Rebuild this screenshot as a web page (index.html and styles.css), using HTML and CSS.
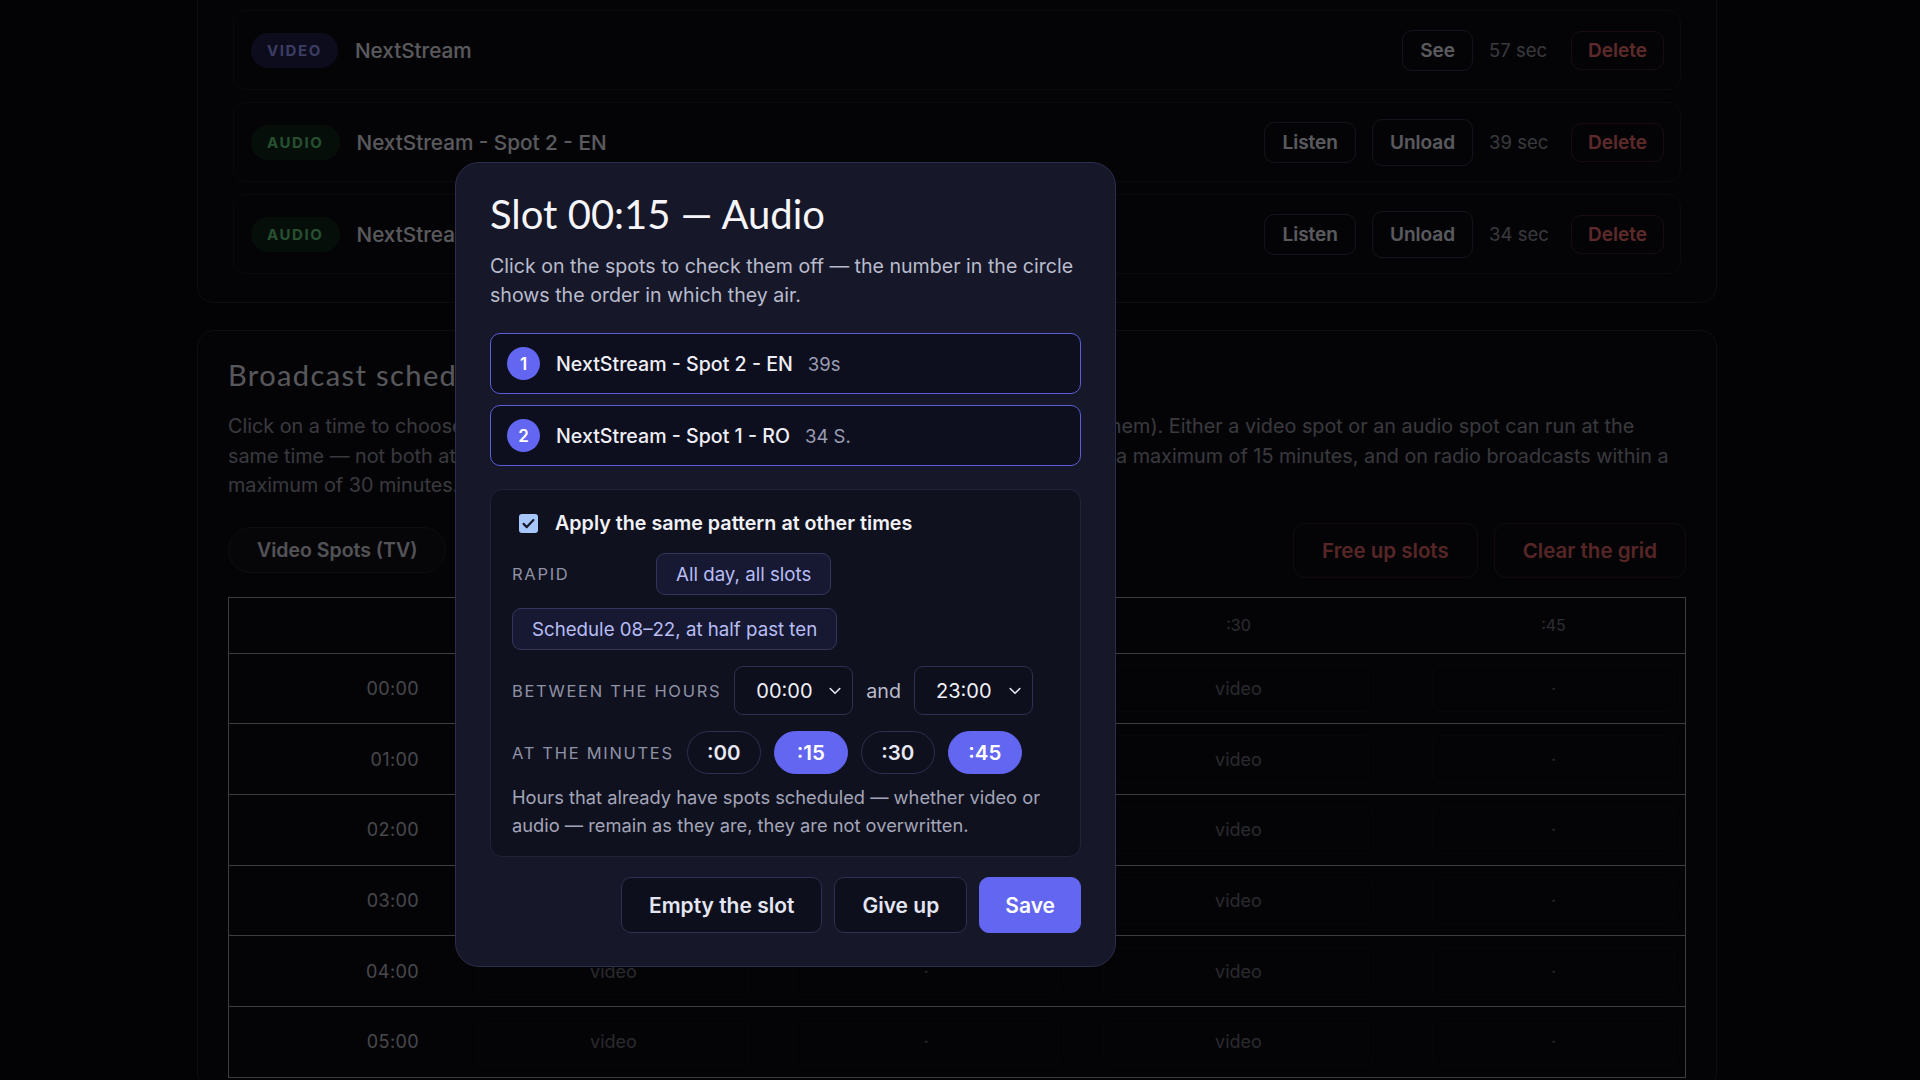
FILE: index.html
```html
<!DOCTYPE html>
<html lang="en">
<head>
<meta charset="utf-8">
<title>Broadcast schedule</title>
<link rel="stylesheet" href="styles.css">
</head>
<body>
<main class="page">
  <section class="card spots-card">
    <div class="spot-row">
      <span class="badge badge-video">VIDEO</span>
      <span class="spot-name">NextStream</span>
      <div class="spot-actions">
        <button class="btn-ghost">See</button>
        <span class="duration">57 sec</span>
        <button class="btn-danger">Delete</button>
      </div>
    </div>
    <div class="spot-row">
      <span class="badge badge-audio">AUDIO</span>
      <span class="spot-name">NextStream - Spot 2 - EN</span>
      <div class="spot-actions">
        <button class="btn-ghost">Listen</button>
        <button class="btn-ghost btn-tall">Unload</button>
        <span class="duration">39 sec</span>
        <button class="btn-danger">Delete</button>
      </div>
    </div>
    <div class="spot-row">
      <span class="badge badge-audio">AUDIO</span>
      <span class="spot-name">NextStream - Spot 1 - RO</span>
      <div class="spot-actions">
        <button class="btn-ghost">Listen</button>
        <button class="btn-ghost btn-tall">Unload</button>
        <span class="duration">34 sec</span>
        <button class="btn-danger">Delete</button>
      </div>
    </div>
  </section>

  <section class="card schedule-card">
    <h2 class="schedule-title">Broadcast schedule</h2>
    <p class="schedule-text">Click on a time to choose the spots that air in that slot (click a selected spot again to uncheck them). Either a video spot or an audio spot can run at the<br>same time — not both at once in one slot. On TV broadcasts, spots in each hour must fit within a maximum of 15 minutes, and on radio broadcasts within a<br>maximum of 30 minutes.</p>

    <div class="toolbar">
      <div class="tabs">
        <button class="tab">Video Spots (TV)</button>
        <button class="tab">Audio Spots (Radio)</button>
      </div>
      <div class="toolbar-actions">
        <button class="btn-danger btn-big">Free up slots</button>
        <button class="btn-danger btn-big">Clear the grid</button>
      </div>
    </div>

    <div class="grid">
      <div class="grid-row grid-head">
        <div class="cell-time"></div>
        <div class="cell-head">:00</div>
        <div class="cell-head">:15</div>
        <div class="cell-head">:30</div>
        <div class="cell-head">:45</div>
      </div>
      <div class="grid-row">
        <div class="cell-time">00:00</div>
        <div class="cell"><span class="slot">video</span></div>
        <div class="cell"><span class="slot">·</span></div>
        <div class="cell"><span class="slot">video</span></div>
        <div class="cell"><span class="slot">·</span></div>
      </div>
      <div class="grid-row">
        <div class="cell-time">01:00</div>
        <div class="cell"><span class="slot">video</span></div>
        <div class="cell"><span class="slot">·</span></div>
        <div class="cell"><span class="slot">video</span></div>
        <div class="cell"><span class="slot">·</span></div>
      </div>
      <div class="grid-row">
        <div class="cell-time">02:00</div>
        <div class="cell"><span class="slot">video</span></div>
        <div class="cell"><span class="slot">·</span></div>
        <div class="cell"><span class="slot">video</span></div>
        <div class="cell"><span class="slot">·</span></div>
      </div>
      <div class="grid-row">
        <div class="cell-time">03:00</div>
        <div class="cell"><span class="slot">video</span></div>
        <div class="cell"><span class="slot">·</span></div>
        <div class="cell"><span class="slot">video</span></div>
        <div class="cell"><span class="slot">·</span></div>
      </div>
      <div class="grid-row">
        <div class="cell-time">04:00</div>
        <div class="cell"><span class="slot">video</span></div>
        <div class="cell"><span class="slot">·</span></div>
        <div class="cell"><span class="slot">video</span></div>
        <div class="cell"><span class="slot">·</span></div>
      </div>
      <div class="grid-row">
        <div class="cell-time">05:00</div>
        <div class="cell"><span class="slot">video</span></div>
        <div class="cell"><span class="slot">·</span></div>
        <div class="cell"><span class="slot">video</span></div>
        <div class="cell"><span class="slot">·</span></div>
      </div>
    </div>
  </section>
</main>

<div class="backdrop"></div>

<div class="modal" role="dialog" aria-labelledby="slot-title">
  <h1 class="modal-title" id="slot-title">Slot 00:15 — Audio</h1>
  <p class="modal-desc">Click on the spots to check them off — the number in the circle shows the order in which they air.</p>

  <div class="pick-list">
    <div class="pick">
      <span class="pick-num">1</span>
      <span class="pick-name">NextStream - Spot 2 - EN</span>
      <span class="pick-dur">39s</span>
    </div>
    <div class="pick">
      <span class="pick-num">2</span>
      <span class="pick-name">NextStream - Spot 1 - RO</span>
      <span class="pick-dur">34 S.</span>
    </div>
  </div>

  <div class="pattern">
    <label class="check-row">
      <svg class="check" width="19" height="19" viewBox="0 0 19 19" aria-hidden="true">
        <rect x="0" y="0" width="19" height="19" rx="3" fill="#a8c7fa"/>
        <path d="M4.6 9.9l3.2 3.2 6.6-7" fill="none" stroke="#17182a" stroke-width="2.2" stroke-linecap="round" stroke-linejoin="round"/>
      </svg>
      <span>Apply the same pattern at other times</span>
    </label>

    <div class="field field-wrap">
      <span class="field-label label-rapid">Rapid</span>
      <button class="btn-soft">All day, all slots</button>
      <button class="btn-soft">Schedule 08–22, at half past ten</button>
    </div>

    <div class="field">
      <span class="field-label">Between the hours</span>
      <div class="select"><span>00:00</span>
        <svg width="12" height="8" viewBox="0 0 12 8" aria-hidden="true"><path d="M1.2 1.5l4.8 4.8 4.8-4.8" fill="none" stroke="#e6e7f0" stroke-width="1.6" stroke-linecap="round" stroke-linejoin="round"/></svg>
      </div>
      <span class="field-and">and</span>
      <div class="select"><span>23:00</span>
        <svg width="12" height="8" viewBox="0 0 12 8" aria-hidden="true"><path d="M1.2 1.5l4.8 4.8 4.8-4.8" fill="none" stroke="#e6e7f0" stroke-width="1.6" stroke-linecap="round" stroke-linejoin="round"/></svg>
      </div>
    </div>

    <div class="field">
      <span class="field-label">At the minutes</span>
      <button class="pill">:00</button>
      <button class="pill pill-on">:15</button>
      <button class="pill">:30</button>
      <button class="pill pill-on">:45</button>
    </div>

    <p class="pattern-note">Hours that already have spots scheduled — whether video or audio — remain as they are, they are not overwritten.</p>
  </div>

  <div class="modal-foot">
    <button class="btn-foot">Empty the slot</button>
    <button class="btn-foot">Give up</button>
    <button class="btn-foot btn-primary">Save</button>
  </div>
</div>
</body>
</html>
```

FILE: styles.css
```css
* { box-sizing: border-box; }

html, body { margin: 0; }

body {
  background: #08080d;
  color: #e6e6ee;
  font-family: "Inter", "Noto Sans", sans-serif;
  height: 1080px;
  overflow: hidden;
}

button {
  font-family: inherit;
  cursor: pointer;
}

/* ---------- page behind the dialog ---------- */

.page {
  padding-left: 197px;
}

.card {
  width: 1520px;
  background: #0c0c13;
  border: 1px solid #20202e;
  border-radius: 16px;
}

.spots-card {
  margin-top: -18px;
  padding: 27px 35px 28px;
  display: flex;
  flex-direction: column;
  gap: 12px;
}

.spot-row {
  height: 80px;
  display: flex;
  align-items: center;
  padding: 0 16px 0 17px;
  border: 1px solid #181824;
  border-radius: 12px;
}

.badge {
  height: 35px;
  display: inline-flex;
  align-items: center;
  padding: 0 16px;
  border-radius: 18px;
  font-size: 15px;
  font-weight: 700;
  letter-spacing: 1.6px;
}

.badge-video {
  background: #1f1f47;
  color: #9297f5;
}

.badge-audio {
  background: #10251a;
  color: #62c979;
}

.spot-name {
  margin-left: 17px;
  font-size: 20.7px;
  font-weight: 500;
  color: #e2e2ea;
}

.spot-actions {
  margin-left: auto;
  display: flex;
  align-items: center;
  gap: 16px;
}

.btn-ghost {
  height: 41px;
  padding: 0 17px;
  border-radius: 10px;
  border: 1px solid #30304a;
  background: transparent;
  color: #e2e2ec;
  font-size: 19px;
  font-weight: 600;
}

.btn-tall { height: 47px; }

.duration {
  min-width: 66px;
  font-size: 18.5px;
  color: #8e8e99;
}

.btn-danger {
  height: 39px;
  padding: 0 16px;
  border-radius: 10px;
  border: 1px solid rgba(248, 113, 113, 0.2);
  background: transparent;
  color: #e66a6a;
  font-size: 19px;
  font-weight: 600;
}

.schedule-card {
  margin-top: 27px;
  padding: 26px 30px 0;
  height: 760px;
}

.schedule-title {
  margin: 0;
  font-family: "Lato", "Inter", sans-serif;
  font-weight: 400;
  font-size: 29px;
  line-height: 36px;
  letter-spacing: 1.4px;
  color: #dcdce4;
}

.schedule-text {
  margin: 19px 0 0;
  font-size: 19.8px;
  line-height: 29.5px;
  color: #8f8f9c;
  white-space: nowrap;
}

.toolbar {
  margin-top: 22px;
  height: 55px;
  display: flex;
  align-items: center;
  justify-content: space-between;
}

.tabs {
  display: flex;
  gap: 12px;
}

.tab {
  height: 46px;
  padding: 0 28px;
  border-radius: 23px;
  border: 1px solid #22222d;
  background: #0f0f18;
  color: #cfcfd9;
  font-size: 19.5px;
  font-weight: 600;
}

.toolbar-actions {
  display: flex;
  gap: 16px;
}

.btn-big {
  height: 55px;
  padding: 0 28px;
  border-radius: 12px;
  font-size: 20.5px;
  color: #d86060;
  border-color: rgba(248, 113, 113, 0.14);
}

.grid {
  margin-top: 19px;
  border: 1px solid #9a9aa4;
  border-bottom: 0;
}

.grid-row {
  display: grid;
  grid-template-columns: 227px 315px 310px 315px 1fr;
  height: 70.7px;
  border-bottom: 1px solid #9a9aa4;
}

.grid-head {
  height: 56px;
}

.cell-time {
  display: flex;
  align-items: center;
  justify-content: flex-end;
  padding-right: 37px;
  font-size: 18px;
  letter-spacing: 0.4px;
  color: #b4b4bd;
}

.cell-head {
  display: flex;
  align-items: center;
  justify-content: center;
  font-size: 16px;
  color: #70707b;
}

.cell-head:last-child {
  padding-left: 26px;
}

.cell {
  display: flex;
  padding: 11px 22px;
}

.cell:last-child {
  padding: 11px 10px 11px 36px;
}

.slot {
  flex: 1;
  display: flex;
  align-items: center;
  justify-content: center;
  border: 1px solid #13131b;
  border-radius: 8px;
  font-size: 18px;
  color: #686874;
}

/* ---------- dialog ---------- */

.backdrop {
  position: fixed;
  inset: 0;
  background: rgba(0, 0, 0, 0.6);
}

.modal {
  position: fixed;
  left: 455px;
  top: 162px;
  width: 661px;
  padding: 27px 34px 33px;
  background: #161829;
  border: 1px solid #2b2d4a;
  border-radius: 24px;
}

.modal-title {
  margin: 0;
  font-family: "Lato", "Inter", sans-serif;
  font-weight: 400;
  font-size: 40px;
  line-height: 48px;
  color: #f5f5fa;
}

.modal-desc {
  margin: 14px 0 0;
  font-size: 19.6px;
  line-height: 29px;
  color: #b9bbcc;
}

.pick-list {
  margin-top: 23px;
  display: flex;
  flex-direction: column;
  gap: 11px;
}

.pick {
  height: 61px;
  display: flex;
  align-items: center;
  gap: 16px;
  padding: 0 16px;
  background: #0e0f1e;
  border: 1.5px solid #5b5ed8;
  border-radius: 10px;
}

.pick-num {
  width: 33px;
  height: 33px;
  border-radius: 50%;
  background: #6366f1;
  color: #fff;
  display: flex;
  align-items: center;
  justify-content: center;
  font-size: 17px;
  font-weight: 600;
}

.pick-name {
  font-size: 19.6px;
  font-weight: 500;
  color: #eeeef6;
}

.pick-dur {
  margin-left: -1px;
  font-size: 18.5px;
  color: #9a9cb2;
}

.pattern {
  margin-top: 23px;
  padding: 19px 21px 17px;
  background: #10111f;
  border: 1px solid #21233a;
  border-radius: 12px;
  display: flex;
  flex-direction: column;
  gap: 16px;
}

.check-row {
  height: 28px;
  display: flex;
  align-items: center;
  gap: 17px;
  font-size: 19.7px;
  font-weight: 600;
  color: #f1f1f7;
}

.check {
  margin-left: 7px;
  flex: none;
}

.field {
  display: flex;
  align-items: center;
  gap: 13px;
}

.field-wrap {
  flex-wrap: wrap;
  row-gap: 13px;
}

.field-label {
  font-size: 16.5px;
  letter-spacing: 1.7px;
  text-transform: uppercase;
  color: #8f91a6;
}

.label-rapid {
  width: 131px;
}

.btn-soft {
  height: 42px;
  padding: 0 19px;
  border-radius: 9px;
  border: 1px solid #33365a;
  background: #161931;
  color: #b8bdf6;
  font-size: 18.7px;
}

.select {
  width: 119px;
  height: 49px;
  display: flex;
  align-items: center;
  justify-content: space-between;
  padding: 0 11px 0 21px;
  border-radius: 9px;
  border: 1px solid #2d3050;
  background: #0e0f1d;
  font-size: 20px;
  color: #f0f0f6;
}

.field-and {
  font-size: 19.7px;
  color: #b9bbcc;
}

.pill {
  height: 43px;
  min-width: 74px;
  padding: 0 19px;
  border-radius: 22px;
  border: 1px solid #2d3050;
  background: #0f101e;
  color: #e8e8f2;
  font-size: 20.5px;
  font-weight: 600;
}

.pill-on {
  background: #6366f1;
  border-color: #6366f1;
  color: #fff;
}

.pattern-note {
  margin: -7px 0 0;
  font-size: 18.3px;
  line-height: 28px;
  color: #a3a5b8;
}

.modal-foot {
  margin-top: 20px;
  display: flex;
  justify-content: flex-end;
  gap: 12px;
}

.btn-foot {
  height: 56px;
  padding: 0 27px;
  border-radius: 10px;
  border: 1px solid #2d3050;
  background: #0e0f1d;
  color: #e4e6f2;
  font-size: 21px;
  font-weight: 600;
}

.btn-primary {
  padding: 0 25px;
  background: #6366f1;
  border-color: #6366f1;
  color: #fff;
}
```
